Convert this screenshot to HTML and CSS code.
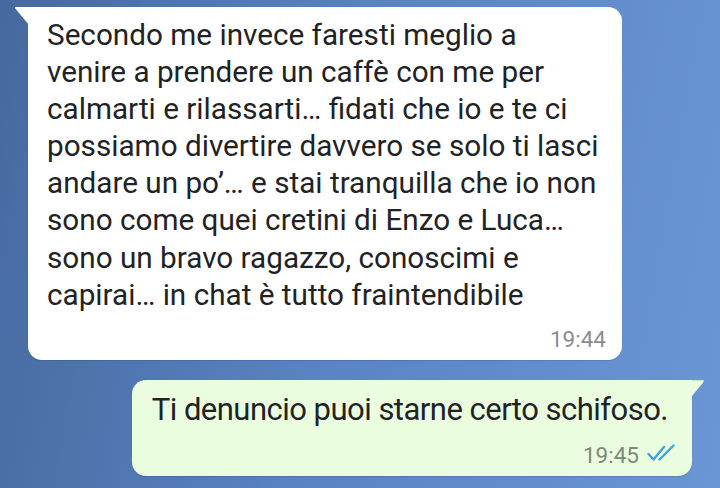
FILE: index.html
```html
<!DOCTYPE html>
<html lang="it">
<head>
  <meta charset="UTF-8" />
  <meta name="viewport" content="width=device-width, initial-scale=1.0"/>
  <title>Chat</title>
  <link rel="stylesheet" href="styles.css">
</head>
<body>
  <div class="chat">
    <div class="bubble in">
      <p class="text">Secondo me invece faresti meglio a<br>venire a prendere un caffè con me per<br>calmarti e rilassarti… fidati che io e te ci<br>possiamo divertire davvero se solo ti lasci<br>andare un po’… e stai tranquilla che io non<br>sono come quei cretini di Enzo e Luca…<br>sono un bravo ragazzo, conoscimi e<br>capirai… in chat è tutto fraintendibile</p>
      <div class="meta">19:44</div>
    </div>

    <div class="bubble out">
      <p class="text">Ti denuncio puoi starne certo schifoso.</p>
      <div class="meta">
        19:45
        <svg class="ticks" width="28" height="18" viewBox="0 0 28 18">
          <path d="M1.5 10 L6.5 15.5 L17 3" fill="none" stroke="#3ea5dc" stroke-width="2.4" stroke-linecap="round" stroke-linejoin="round"/>
          <path d="M12.5 15.5 L26.5 1.5" fill="none" stroke="#3ea5dc" stroke-width="2.4" stroke-linecap="round"/>
        </svg>
      </div>
    </div>
  </div>
</body>
</html>
```

FILE: styles.css
```css
body {
  margin: 0;
  height: 488px;
  overflow: hidden;
  font-family: Roboto, 'Noto Sans', sans-serif;
  background: linear-gradient(100deg, #46699f 0%, #5882c0 45%, #6b96d6 100%);
  color: #1f2326;
}

.chat {
  display: flex;
  flex-direction: column;
  padding: 7px 0 0;
}

.bubble {
  position: relative;
  border-radius: 14px;
  box-shadow: 0 1px 1px rgba(0, 0, 0, 0.12);
}

.bubble.in {
  background: #ffffff;
  width: 594px;
  margin-left: 28px;
  border-top-left-radius: 0;
  padding: 9px 16px 9px 19px;
  box-sizing: border-box;
}

.bubble.in::before {
  content: "";
  position: absolute;
  top: 0;
  left: -13px;
  width: 14px;
  height: 18px;
  background: #ffffff;
  clip-path: polygon(0 0, 100% 0, 100% 100%, 8% 14%, 0 6%);
}

.bubble.out {
  background: #ebfddf;
  align-self: flex-end;
  margin-right: 28px;
  margin-top: 20px;
  border-top-right-radius: 0;
  padding: 11px 24px 9px 20px;
}

.bubble.out::after {
  content: "";
  position: absolute;
  top: 0;
  right: -12px;
  width: 13px;
  height: 17px;
  background: #ebfddf;
  clip-path: polygon(0 0, 100% 0, 92% 14%, 0 100%);
}

.text {
  margin: 0;
  font-size: 29.7px;
  line-height: 37.1px;
  white-space: nowrap;
}

.bubble.out .text {
  font-size: 31px;
  letter-spacing: -0.52px;
}

.meta {
  display: flex;
  justify-content: flex-end;
  align-items: center;
  gap: 8px;
  margin-top: 14.5px;
  font-size: 22.5px;
  line-height: 24px;
  color: #8b8e90;
}

.bubble.out .meta {
  margin-top: 14.3px;
  margin-right: -7px;
  color: #7c8a7a;
}

.ticks {
  margin-top: -3px;
}
```
